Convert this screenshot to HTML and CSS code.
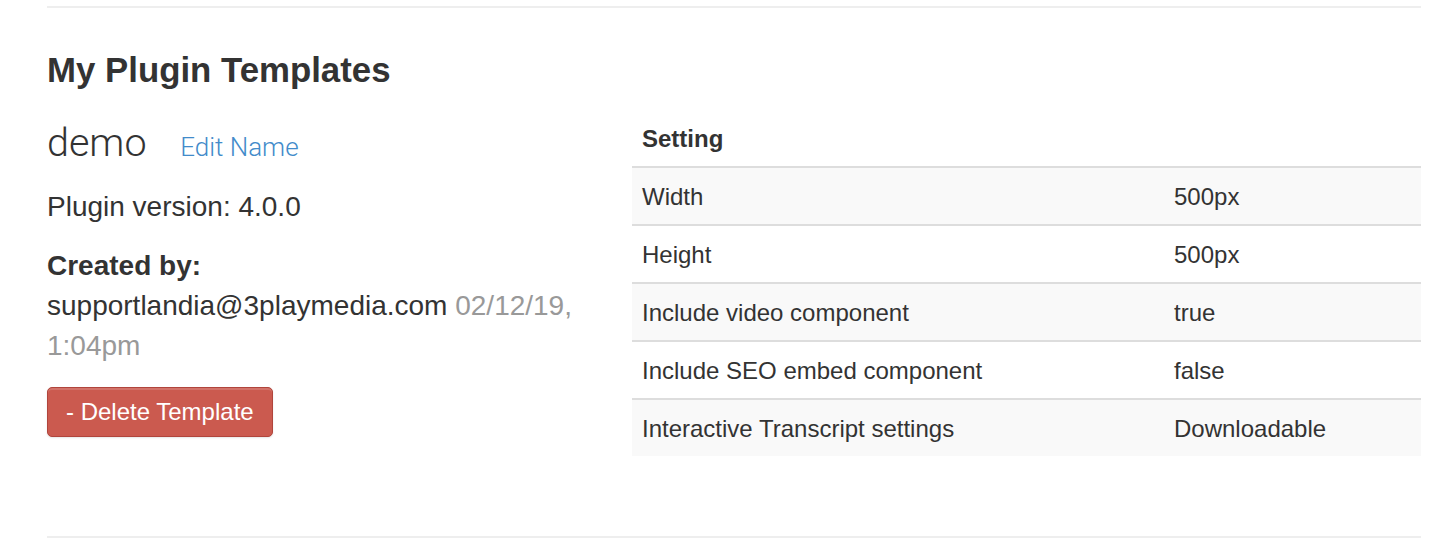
FILE: index.html
```html
<!DOCTYPE html>
<html lang="en">
<head>
    <meta charset="UTF-8">
    <meta name="viewport" content="width=device-width, initial-scale=1.0">
    <title>My Plugin Templates</title>
    <link rel="stylesheet" href="styles.css">
</head>
<body>

    <div class="page">
        <hr class="divider top">

        <h2 class="section-title">My Plugin Templates</h2>

        <div class="template-row">
            <div class="template-info">
                <h3 class="template-name">demo <a href="#" class="edit-link">Edit Name</a></h3>
                <p>Plugin version: 4.0.0</p>
                <p>
                    <strong>Created by:</strong><br>
                    supportlandia@3playmedia.com <span class="muted">02/12/19, 1:04pm</span>
                </p>
                <button class="btn-danger">- Delete Template</button>
            </div>

            <table class="settings">
                <thead>
                    <tr>
                        <th>Setting</th>
                        <th></th>
                    </tr>
                </thead>
                <tbody>
                    <tr><td>Width</td><td>500px</td></tr>
                    <tr><td>Height</td><td>500px</td></tr>
                    <tr><td>Include video component</td><td>true</td></tr>
                    <tr><td>Include SEO embed component</td><td>false</td></tr>
                    <tr><td>Interactive Transcript settings</td><td>Downloadable</td></tr>
                </tbody>
            </table>
        </div>

        <hr class="divider bottom">
    </div>

</body>
</html>
```

FILE: styles.css
```css
body {
    margin: 0;
    font-family: "Liberation Sans", Arial, sans-serif;
    color: #333;
    background-color: #fff;
}

.page {
    padding: 6px 19px 0 47px;
}

.divider {
    border: 0;
    border-top: 2px solid #eee;
    margin: 0;
}

.divider.bottom {
    margin-top: 80px;
}

.section-title {
    font-size: 34.8px;
    line-height: 37px;
    font-weight: bold;
    margin: 43px 0 0;
}

.template-row {
    display: grid;
    grid-template-columns: 585px 1fr;
    align-items: start;
    margin-top: 20px;
}

.template-name {
    font-family: Roboto, "Liberation Sans", sans-serif;
    font-weight: 300;
    font-size: 39.5px;
    line-height: 43px;
    margin: 13px 0 18px;
}

.edit-link {
    font-size: 26px;
    color: #428bca;
    text-decoration: none;
    margin-left: 24px;
}

.template-info p {
    font-size: 28px;
    line-height: 40px;
    margin: 0 0 19px;
}

.muted {
    color: #999;
}

.btn-danger {
    display: inline-block;
    margin-top: 2px;
    height: 50px;
    padding: 0 18px;
    font-family: "Liberation Sans", Arial, sans-serif;
    font-size: 24px;
    color: #fff;
    background-color: #cb5a4f;
    border: 1px solid #b0453c;
    border-radius: 5px;
    box-shadow: inset 0 2px 0 rgba(255, 255, 255, 0.15), 0 1px 2px rgba(0, 0, 0, 0.1);
    cursor: pointer;
}

.settings {
    width: 100%;
    margin-top: 2px;
    border-collapse: collapse;
    font-size: 24px;
    line-height: 30px;
}

.settings th,
.settings td {
    text-align: left;
    padding: 14px 10px 12px;
}

.settings th {
    font-weight: bold;
    border-bottom: 2px solid #ddd;
}

.settings td {
    border-top: 2px solid #ddd;
}

.settings td:first-child {
    width: 512px;
}

.settings tbody tr:nth-child(odd) {
    background-color: #f9f9f9;
}

.settings tbody tr:first-child td {
    border-top: 0;
}
```
